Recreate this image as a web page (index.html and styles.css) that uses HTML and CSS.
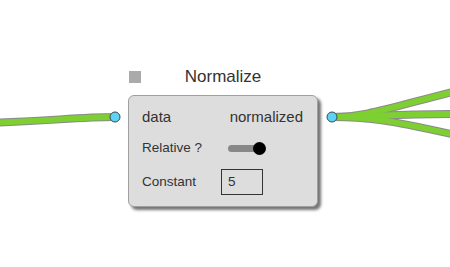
FILE: index.html
```html
<!DOCTYPE html>
<html>
<head>
<meta charset="utf-8">
<link rel="stylesheet" href="styles.css">
</head>
<body>
<div class="canvas">
  <svg class="wires" width="450" height="267" viewBox="0 0 450 267">
    <g class="wire-outline">
      <path d="M -60 124 C 40 123, 70 117, 115 117"/>
      <path d="M 332 117 C 365 117, 385 109, 460 90"/>
      <path d="M 332 117 C 370 117, 395 114, 460 114"/>
      <path d="M 332 117 C 365 117, 385 119, 460 136"/>
    </g>
    <g class="wire-fill">
      <path d="M -60 124 C 40 123, 70 117, 115 117"/>
      <path d="M 332 117 C 365 117, 385 109, 460 90"/>
      <path d="M 332 117 C 370 117, 395 114, 460 114"/>
      <path d="M 332 117 C 365 117, 385 119, 460 136"/>
    </g>
    <circle class="port" cx="115" cy="117" r="5"/>
    <circle class="port" cx="332" cy="117" r="5"/>
  </svg>

  <div class="node">
    <div class="node-header">
      <span class="node-icon"></span>
      <span class="node-title">Normalize</span>
      <span></span>
    </div>
    <div class="node-body">
      <div class="row row-io">
        <span class="io-label">data</span>
        <span class="io-label">normalized</span>
      </div>
      <div class="row">
        <span class="param-label label-rel">Relative ?</span>
        <span class="toggle"><span class="toggle-knob"></span></span>
      </div>
      <div class="row">
        <span class="param-label label-const">Constant</span>
        <span class="num-input">5</span>
      </div>
    </div>
  </div>
</div>
</body>
</html>
```

FILE: styles.css
```css
html, body {
  margin: 0;
  padding: 0;
  background: #ffffff;
}

.canvas {
  position: relative;
  width: 450px;
  height: 267px;
  overflow: hidden;
  background: #ffffff;
  font-family: "Liberation Sans", Arial, sans-serif;
  color: #333333;
}

.wires {
  position: absolute;
  left: 0;
  top: 0;
}

.wire-outline path {
  fill: none;
  stroke: #8a8a8a;
  stroke-width: 8;
}

.wire-fill path {
  fill: none;
  stroke: #7dcf32;
  stroke-width: 6;
}

.port {
  fill: #5fd3f3;
  stroke: #3a4a55;
  stroke-width: 1;
}

.node {
  position: absolute;
  left: 128px;
  top: 67px;
  width: 190px;
}

.node-header {
  display: grid;
  grid-template-columns: 1fr auto 1fr;
  align-items: center;
  height: 20px;
  margin-bottom: 8px;
}

.node-icon {
  width: 12px;
  height: 12px;
  margin-left: 1px;
  background: #aaaaaa;
}

.node-title {
  font-size: 17px;
  line-height: 20px;
  color: #333333;
}

.node-body {
  box-sizing: border-box;
  height: 112px;
  background: #dddddd;
  border: 1px solid #a0a0a0;
  border-radius: 6px;
  box-shadow: 3px 3px 3px rgba(0, 0, 0, 0.55);
  padding: 12px 14px 0 13px;
  display: flex;
  flex-direction: column;
}

.row {
  display: flex;
  align-items: center;
}

.row-io {
  justify-content: space-between;
  height: 18px;
  margin-bottom: 13px;
}

.io-label {
  font-size: 15px;
  line-height: 18px;
}

.row:nth-child(2) {
  height: 18px;
  margin-bottom: 12px;
}

.param-label {
  font-size: 13.5px;
  line-height: 18px;
}

.label-rel {
  width: 86px;
}

.label-const {
  width: 79px;
}

.toggle {
  position: relative;
  width: 32px;
  height: 7px;
  border-radius: 4px;
  background: #888888;
}

.toggle-knob {
  position: absolute;
  right: -6px;
  top: -3px;
  width: 13px;
  height: 13px;
  border-radius: 50%;
  background: #000000;
}

.num-input {
  box-sizing: border-box;
  width: 42px;
  height: 26px;
  border: 1px solid #333333;
  padding-left: 6px;
  font-size: 13.5px;
  line-height: 24px;
  color: #333333;
}
```
